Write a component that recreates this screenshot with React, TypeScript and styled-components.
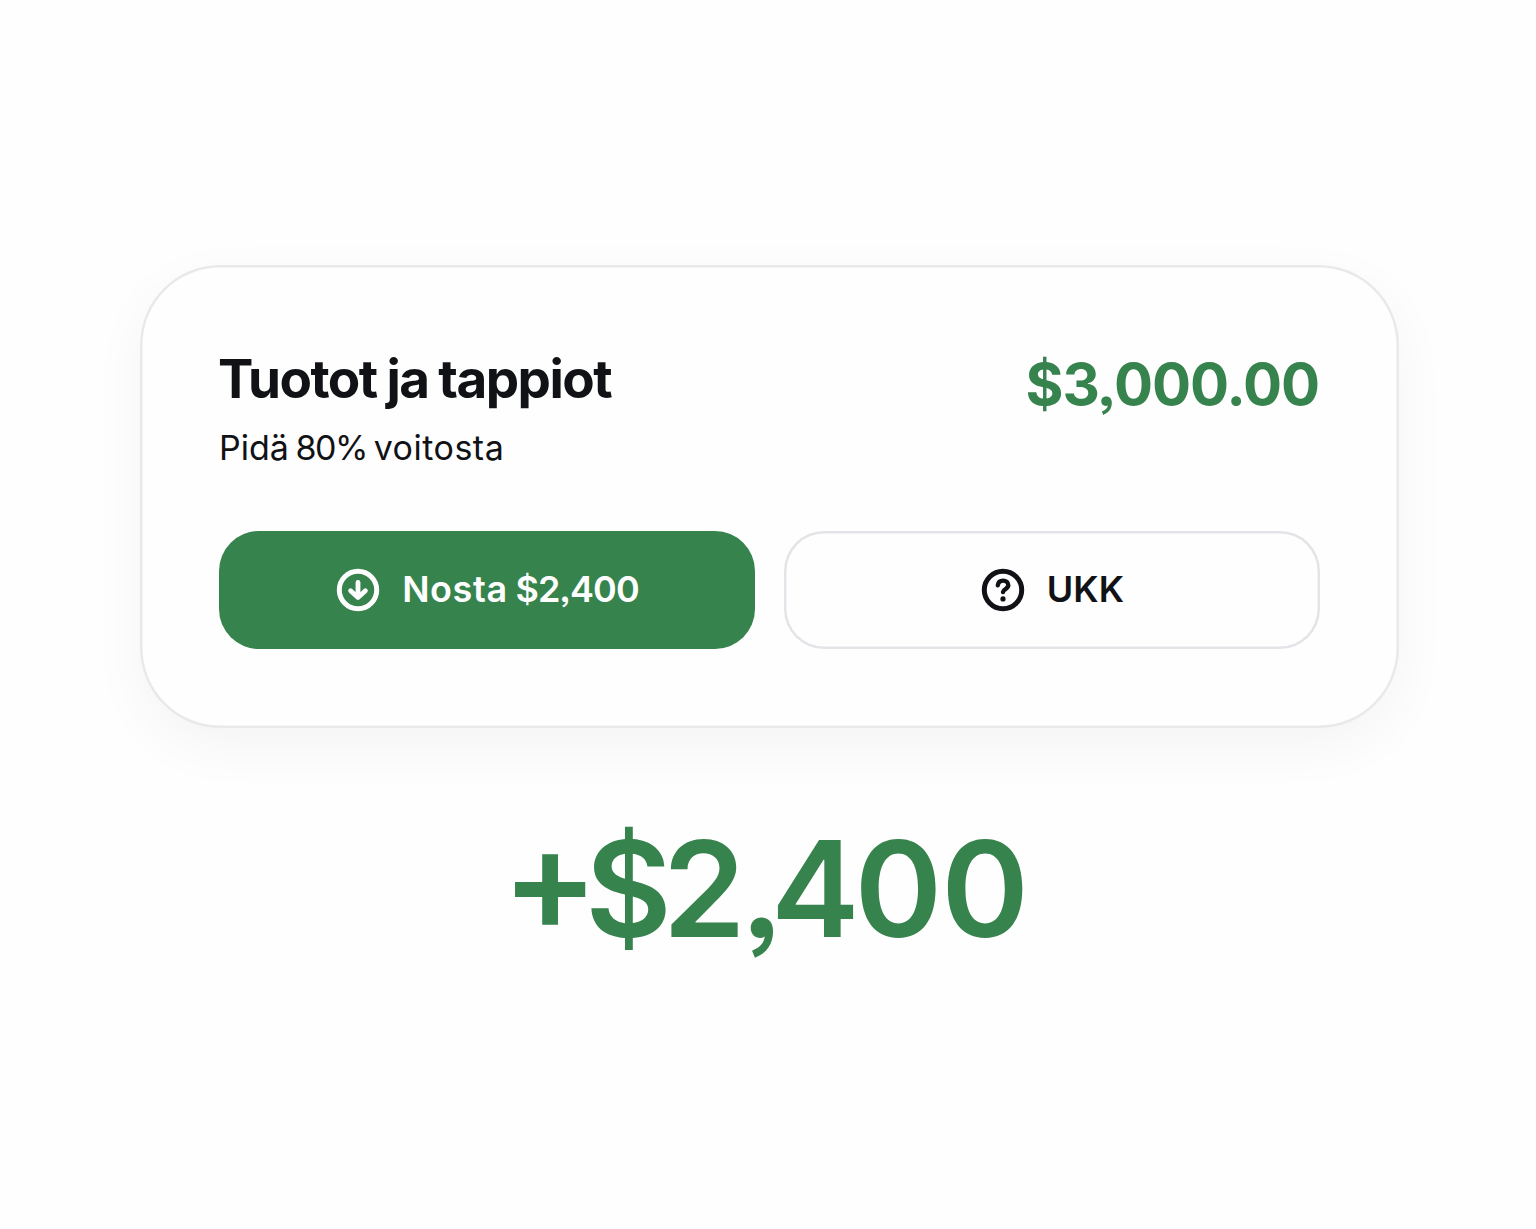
import styled, { createGlobalStyle } from "styled-components";

interface GlyphType {
  text: string;
  spacing: number;
}

// the big sum is kerned by hand
const profit: GlyphType[] = [
  { text: "$", spacing: -9 },
  { text: "2", spacing: -4 },
  { text: ",", spacing: -13 },
  { text: "4", spacing: -5 },
  { text: "00", spacing: -1 },
];

const App = () => {
  return (
    <>
      <GlobalStyle />
      <MainContainer>
        <Card>
          <CardTop>
            <TitleWrapper>
              <MainTitle>Tuotot ja tappiot</MainTitle>
              <SubTitle>
                Pidä <Glyph $spacing={-1.4}>80%</Glyph>{" "}
                <Glyph $spacing={0.5}>voitosta</Glyph>
              </SubTitle>
            </TitleWrapper>
            <Amount>$3,000.00</Amount>
          </CardTop>
          <ButtonWrapper>
            <Button $primary>
              <Icon viewBox="0 0 44 44">
                <circle cx="22" cy="22" r="18.7" strokeWidth="5" />
                <path d="M22 14.5V28" strokeWidth="4.8" />
                <path d="M14.6 22.7L22 29.6L29.4 22.7" strokeWidth="4.8" />
              </Icon>
              <ButtonName $spacing={0.6}>
                Nosta <Glyph $spacing={-0.9}>$2,400</Glyph>
              </ButtonName>
            </Button>
            <Button>
              <Icon viewBox="0 0 44 44">
                <circle cx="22" cy="22" r="18.7" strokeWidth="5" />
                <path
                  d="M16.8 17.2C17.2 14.4 19.3 12.6 22.1 12.6C25.1 12.6 27.3 14.6 27.3 17.3C27.3 21 22.3 20.9 22 24"
                  strokeWidth="4.4"
                />
                <circle cx="22" cy="30.9" r="2.6" fill="currentColor" stroke="none" />
              </Icon>
              <ButtonName $spacing={0.1}>UKK</ButtonName>
            </Button>
          </ButtonWrapper>
        </Card>
        <Profit>
          <Plus>+</Plus>
          {profit.map((glyph) => (
            <Glyph key={glyph.text} $spacing={glyph.spacing}>
              {glyph.text}
            </Glyph>
          ))}
        </Profit>
      </MainContainer>
    </>
  );
};

export default App;

const GlobalStyle = createGlobalStyle`
  * {
    box-sizing: border-box;
  }

  body {
    margin: 0;
    background-color: #fefefe;
    font-family: Inter, "Liberation Sans", sans-serif;
    font-feature-settings: "ss03";
    color: #111216;
  }
`;

const MainContainer = styled.div`
  width: 1536px;
  height: 1229px;
  padding-top: 265px;

  display: flex;
  align-items: center;
  flex-direction: column;
`;

const Card = styled.div`
  display: flex;
  flex-direction: column;

  width: 1259px;
  height: 463px;
  margin-left: 3px;
  padding: 82px 79px 0;

  background-color: #fefefe;
  border-radius: 80px;
  box-shadow: inset 0 0 0 2.5px #e9e9ea, 0 18px 56px rgba(0, 0, 0, 0.045);
`;

const CardTop = styled.div`
  display: flex;
  align-items: flex-start;
  justify-content: space-between;

  height: 184px;
`;

const TitleWrapper = styled.div`
  display: flex;
  flex-direction: column;
  gap: 16px;
`;

const MainTitle = styled.h1`
  margin: 0 0 0 -1px;
  font-size: 53px;
  line-height: 64px;
  font-weight: 700;
  letter-spacing: -1.5px;
  word-spacing: -1.4px;
`;

const SubTitle = styled.p`
  margin: 0;
  font-size: 34px;
  line-height: 42px;
  font-weight: 400;
  word-spacing: -3px;
`;

const Amount = styled.span`
  margin: 2px 1px 0 0;
  font-size: 58px;
  line-height: 70px;
  font-weight: 700;
  letter-spacing: -1.1px;
  color: #37834d;
`;

const ButtonWrapper = styled.div`
  display: grid;
  grid-template-columns: 1fr 1fr;
  gap: 29px;
`;

const Button = styled.button<{ $primary?: boolean }>`
  display: flex;
  align-items: center;
  justify-content: center;
  gap: 22px;

  height: 118px;
  padding: 0 0 1px 1px;
  font-family: inherit;
  font-feature-settings: inherit;
  color: ${({ $primary }) => ($primary ? "#fefefe" : "#111216")};
  background-color: ${({ $primary }) => ($primary ? "#37834d" : "transparent")};
  border: none;
  border-radius: 40px;
  box-shadow: ${({ $primary }) =>
    $primary ? "none" : "inset 0 0 0 2.5px #e4e4e8"};
  cursor: pointer;
`;

const Icon = styled.svg`
  width: 44px;
  height: 44px;
  fill: none;
  stroke: currentColor;
  stroke-linecap: round;
  stroke-linejoin: round;
`;

const ButtonName = styled.span<{ $spacing: number }>`
  padding-bottom: 1px;
  font-size: 36px;
  line-height: 44px;
  font-weight: 600;
  letter-spacing: ${({ $spacing }) => $spacing}px;
  word-spacing: -2px;
`;

const Profit = styled.div`
  display: flex;
  align-items: baseline;

  margin: 75px 6px 0 0;
  font-size: 133px;
  line-height: 164px;
  font-weight: 600;
  color: #37834d;
`;

const Plus = styled.span`
  font-size: 143px;
  letter-spacing: -13px;
  font-feature-settings: "case";
  transform: translateY(4px);
`;

const Glyph = styled.span<{ $spacing: number }>`
  letter-spacing: ${({ $spacing }) => $spacing}px;
`;
